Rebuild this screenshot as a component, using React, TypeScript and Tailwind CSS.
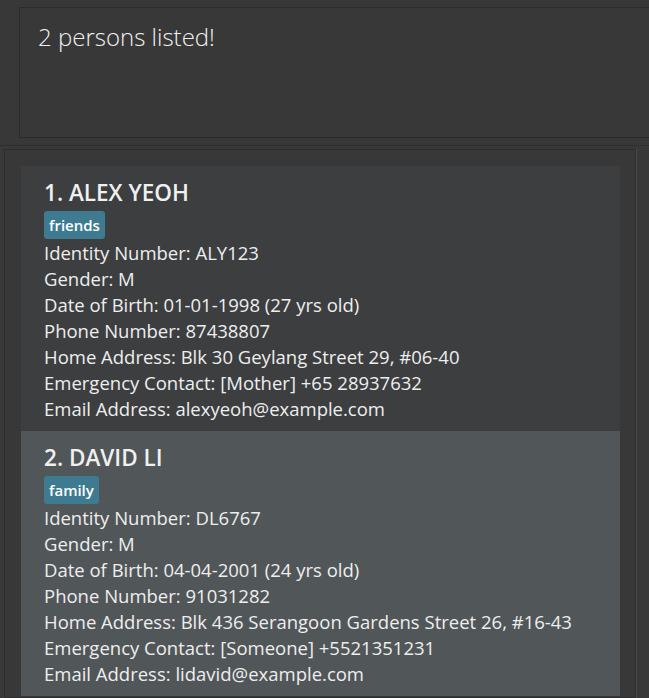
const persons = [
  {
    name: "ALEX YEOH",
    tag: "friends",
    fields: [
      "Identity Number: ALY123",
      "Gender: M",
      "Date of Birth: 01-01-1998 (27 yrs old)",
      "Phone Number: 87438807",
      "Home Address: Blk 30 Geylang Street 29, #06-40",
      "Emergency Contact: [Mother] +65 28937632",
      "Email Address: alexyeoh@example.com",
    ],
  },
  {
    name: "DAVID LI",
    tag: "family",
    fields: [
      "Identity Number: DL6767",
      "Gender: M",
      "Date of Birth: 04-04-2001 (24 yrs old)",
      "Phone Number: 91031282",
      "Home Address: Blk 436 Serangoon Gardens Street 26, #16-43",
      "Emergency Contact: [Someone] +5521351231",
      "Email Address: lidavid@example.com",
    ],
  },
];

function PersonCard({ index, person }: { index: number; person: (typeof persons)[number] }) {
  const selected = index === 2;
  return (
    <div className={`h-[265px] pl-[23px] pt-[12px] ${selected ? "bg-[#515658]" : "bg-[#3c3e40]"}`}>
      <div className="text-[22.5px] leading-[30px] font-semibold text-[#f0f0f0]">
        {index}. {person.name}
      </div>
      <div className="mt-[3px] flex">
        <span className="h-[28px] px-[5px] rounded-[3px] bg-[#3e7b91] text-[15px] leading-[28px] font-semibold text-white">
          {person.tag}
        </span>
      </div>
      <div className="mt-[1px]">
        {person.fields.map((f) => (
          <div key={f} className="text-[18.5px] leading-[26px] text-[#eeeeee] whitespace-nowrap">
            {f}
          </div>
        ))}
      </div>
    </div>
  );
}

export default function App() {
  return (
    <div
      className="w-[649px] h-[698px] bg-[#383838] overflow-hidden flex flex-col"
      style={{ fontFamily: '"Open Sans", "Noto Sans", sans-serif' }}
    >
      {/* Result display */}
      <div className="pt-[7px] pl-[19px] h-[146px] border-b border-[#2e2e2e] shrink-0">
        <div className="h-[131px] w-[660px] border border-[#2b2b2b] bg-[#383838] pl-[18px] pt-[12px]">
          <div className="text-[24px] font-light text-[#f2f2f2] leading-[34px]">2 persons listed!</div>
        </div>
      </div>

      {/* Person list */}
      <div className="flex flex-1 min-h-0 pt-[3px]">
        <div className="ml-[4px] w-[632px] border border-[#2d2d2d] pl-[16px] pr-[15px] pt-[16px] overflow-hidden">
          {persons.map((p, i) => (
            <PersonCard key={p.name} index={i + 1} person={p} />
          ))}
        </div>
        <div className="w-px bg-[#4a4a4a]" />
        <div className="flex-1" />
      </div>
    </div>
  );
}
